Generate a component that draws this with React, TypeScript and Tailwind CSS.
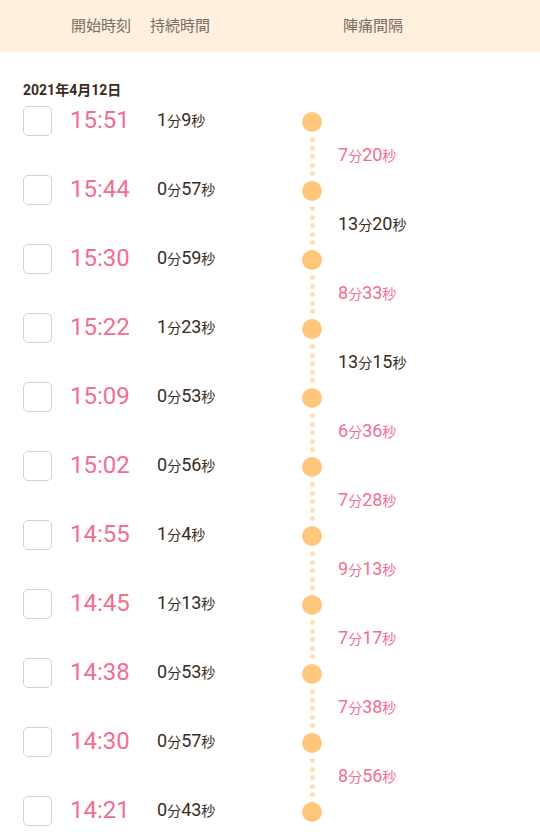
import React from "react";

type Entry = {
  time: string;
  min: number;
  sec: number;
  gap?: [number, number];
};

const entries: Entry[] = [
  { time: "15:51", min: 1, sec: 9, gap: [7, 20] },
  { time: "15:44", min: 0, sec: 57, gap: [13, 20] },
  { time: "15:30", min: 0, sec: 59, gap: [8, 33] },
  { time: "15:22", min: 1, sec: 23, gap: [13, 15] },
  { time: "15:09", min: 0, sec: 53, gap: [6, 36] },
  { time: "15:02", min: 0, sec: 56, gap: [7, 28] },
  { time: "14:55", min: 1, sec: 4, gap: [9, 13] },
  { time: "14:45", min: 1, sec: 13, gap: [7, 17] },
  { time: "14:38", min: 0, sec: 53, gap: [7, 38] },
  { time: "14:30", min: 0, sec: 57, gap: [8, 56] },
  { time: "14:21", min: 0, sec: 43 },
];

function Span({ min, sec }: { min: number; sec: number }) {
  return (
    <span className="whitespace-nowrap">
      <span className="text-[18px]">{min}</span>
      <span className="text-[14px]">分</span>
      <span className="text-[18px]">{sec}</span>
      <span className="text-[14px]">秒</span>
    </span>
  );
}

export default function App() {
  return (
    <div
      className="w-[540px] min-h-[837px] bg-white text-[#3a2b22]"
      style={{ fontFamily: "Roboto, 'Noto Sans CJK JP', sans-serif" }}
    >
      <div className="h-[52px] bg-[#fef0dd] flex items-center text-[15px] text-[#776b63]">
        <span className="ml-[71px] w-[79px]">開始時刻</span>
        <span className="w-[193px]">持続時間</span>
        <span>陣痛間隔</span>
      </div>

      <div className="pt-[28px] pl-[23px] text-[14px] font-bold leading-[20px] text-[#3a2b22]">
        2021年4月12日
      </div>

      <div className="flex mt-[6px]">
        <div className="flex flex-col">
          {entries.map((e) => (
            <div key={e.time} className="h-[69px] flex items-start">
              <div className="h-[30px] flex items-center">
                <div className="ml-[23px] w-[29px] h-[30px] rounded-[5px] border-[1.5px] border-[#d2d2d2] bg-white" />
                <span className="ml-[18px] w-[87px] pb-[3px] text-[24px] text-[#f26e90] leading-none">
                  {e.time}
                </span>
                <span className="w-[145px] pb-[3px] leading-none text-[#3a2b22]">
                  <Span min={e.min} sec={e.sec} />
                </span>
              </div>
            </div>
          ))}
        </div>

        <div className="flex flex-col pt-[6px]">
          {entries.map((e) => (
            <div key={e.time} className="flex flex-col">
              <div className="w-[20px] h-[20px] rounded-full bg-[#ffc77b]" />
              {e.gap && (
                <div className="h-[49px] flex items-center">
                  <div className="w-[20px] flex flex-col items-center gap-[3.5px]">
                    {[0, 1, 2, 3, 4].map((i) => (
                      <div key={i} className="w-[5px] h-[5px] rounded-full bg-[#fde1b6]" />
                    ))}
                  </div>
                  <span
                    className={
                      "ml-[16px] pb-[4px] leading-none " +
                      (e.gap[0] >= 10 ? "text-[#3a2b22]" : "text-[#f26e90]")
                    }
                  >
                    <Span min={e.gap[0]} sec={e.gap[1]} />
                  </span>
                </div>
              )}
            </div>
          ))}
        </div>
      </div>
    </div>
  );
}
